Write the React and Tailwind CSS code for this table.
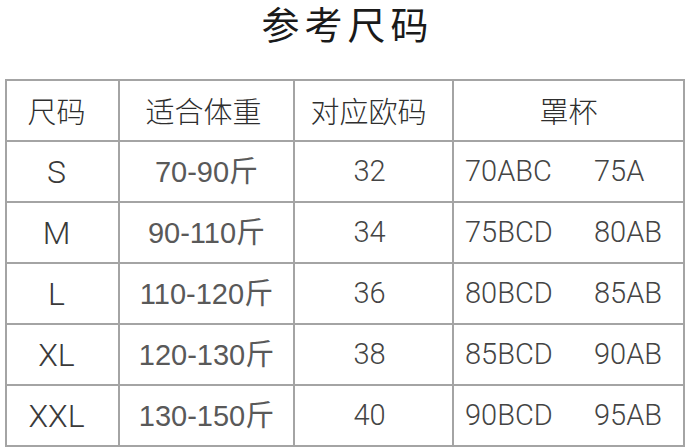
const rows = [
  { size: "S", weight: "70-90斤", eu: "32", cup: ["70ABC", "75A"] },
  { size: "M", weight: "90-110斤", eu: "34", cup: ["75BCD", "80AB"] },
  { size: "L", weight: "110-120斤", eu: "36", cup: ["80BCD", "85AB"] },
  { size: "XL", weight: "120-130斤", eu: "38", cup: ["85BCD", "90AB"] },
  { size: "XXL", weight: "130-150斤", eu: "40", cup: ["90BCD", "95AB"] },
];

const cjk = { fontFamily: '"Noto Sans CJK SC", sans-serif' };
const light = { fontFamily: 'Roboto, "Noto Sans CJK SC", sans-serif' };
const arial = { fontFamily: '"Liberation Sans", "Noto Sans CJK SC", sans-serif' };

export default function App() {
  return (
    <div className="w-[690px] h-[447px] bg-white overflow-hidden" style={cjk}>
      {/* Title */}
      <div className="h-[79px] pl-[5px] text-center text-[38px] leading-[46px] tracking-[5px] text-[#1a1a1a]">
        参考尺码
      </div>

      {/* Size table */}
      <table className="ml-[5px] w-[680px] border-collapse border-2 border-[#a4a4a4] table-fixed">
        <colgroup>
          <col className="w-[113px]" />
          <col className="w-[175px]" />
          <col className="w-[159px]" />
          <col />
        </colgroup>
        <thead>
          <tr className="h-[61px] text-[29px] font-light text-[#2e2e2e]">
            <th className="border-2 border-[#a4a4a4] font-light pr-[12px]">尺码</th>
            <th className="border-2 border-[#a4a4a4] font-light pr-[6px]">适合体重</th>
            <th className="border-2 border-[#a4a4a4] font-light pr-[10px]">对应欧码</th>
            <th className="border-2 border-[#a4a4a4] font-light">罩杯</th>
          </tr>
        </thead>
        <tbody>
          {rows.map((r) => (
            <tr key={r.size} className="h-[61px]">
              <td
                className="border-2 border-[#a4a4a4] text-center text-[32px] font-light text-[#3a3a3a] pr-[12px]"
                style={light}
              >
                {r.size}
              </td>
              <td className="border-2 border-[#a4a4a4] text-center text-[29px] text-[#595959]" style={arial}>
                {r.weight.slice(0, -1)}
                <span style={cjk}>斤</span>
              </td>
              <td
                className="border-2 border-[#a4a4a4] text-center text-[29px] font-light text-[#444444] pr-[8px]"
                style={light}
              >
                {r.eu}
              </td>
              <td className="border-2 border-[#a4a4a4] text-[29px] font-light text-[#444444]" style={light}>
                <div className="flex pl-[11px]">
                  <span className="w-[129px]">{r.cup[0]}</span>
                  <span>{r.cup[1]}</span>
                </div>
              </td>
            </tr>
          ))}
        </tbody>
      </table>
    </div>
  );
}
